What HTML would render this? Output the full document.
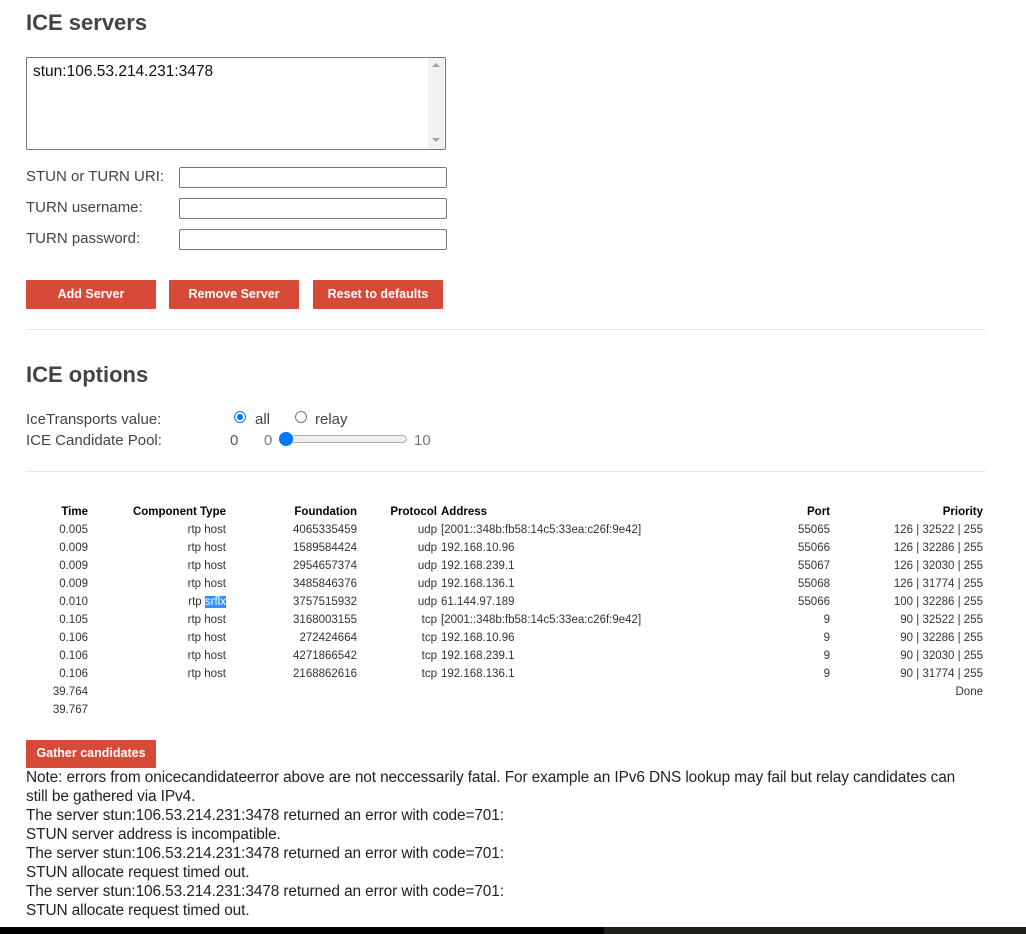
<!DOCTYPE html>
<html><head><meta charset="utf-8"><style>
body{margin:0;width:1026px;height:934px;background:#fff;font-family:"Liberation Sans",Arial,sans-serif;color:#444;position:relative;overflow:hidden}
.a{position:absolute;white-space:nowrap}
h2{position:absolute;margin:0;font-size:22px;font-weight:bold;color:#444;left:26px}
.lbl{font-size:15px;line-height:20px}
.inp{position:absolute;left:179px;width:266px;height:19px;border:1px solid #767676;border-radius:2px}
.btn{position:absolute;height:29px;background:#d84a38;color:#fff;font-size:12.5px;font-weight:bold;text-align:center;line-height:28px;border-radius:1px}
.hr{position:absolute;left:26px;width:960px;height:1px;background:#e8e8e8}
.t{position:absolute;font-size:11.5px;line-height:18px;color:#333}
.t div{height:18px}
.r{text-align:right}
.note{position:absolute;left:26px;top:768px;width:950px;font-size:15.4px;line-height:19px;color:#222;letter-spacing:-0.1px}
</style></head><body>
<h2 style="top:10px">ICE servers</h2>
<div class="a" style="left:26px;top:57px;width:418px;height:91px;border:1px solid #767676;border-radius:2px"></div>
<div class="a" style="left:428px;top:58px;width:16px;height:91px;background:#f1f1f1"></div>
<div class="a" style="left:432px;top:63px;width:0;height:0;border-left:4px solid transparent;border-right:4px solid transparent;border-bottom:4px solid #a3a3a3"></div>
<div class="a" style="left:432px;top:138px;width:0;height:0;border-left:4px solid transparent;border-right:4px solid transparent;border-top:4px solid #a3a3a3"></div>
<div class="a" style="left:33px;top:62px;font-size:15.5px;color:#111;line-height:20px">stun:106.53.214.231:3478</div>
<div class="a lbl" style="left:26px;top:167px">STUN or TURN URI:</div>
<div class="a lbl" style="left:26px;top:198px">TURN username:</div>
<div class="a lbl" style="left:26px;top:229px">TURN password:</div>
<div class="inp" style="top:167px"></div>
<div class="inp" style="top:198px"></div>
<div class="inp" style="top:229px"></div>
<div class="btn" style="left:26px;top:280px;width:130px">Add Server</div>
<div class="btn" style="left:169px;top:280px;width:130px">Remove Server</div>
<div class="btn" style="left:313px;top:280px;width:130px">Reset to defaults</div>
<div class="hr" style="top:329px"></div>
<h2 style="top:362px">ICE options</h2>
<div class="a lbl" style="left:26px;top:410px">IceTransports value:</div>
<div class="a lbl" style="left:26px;top:431px">ICE Candidate Pool:</div>
<div class="a" style="left:234px;top:411px;width:10px;height:10px;border:1px solid #0075ff;border-radius:50%"></div>
<div class="a" style="left:237px;top:414px;width:6px;height:6px;background:#0075ff;border-radius:50%"></div>
<div class="a lbl" style="left:255px;top:410px">all</div>
<div class="a" style="left:295px;top:411px;width:10px;height:10px;border:1px solid #767676;border-radius:50%"></div>
<div class="a lbl" style="left:315px;top:410px">relay</div>
<div class="a lbl" style="left:230px;top:431px;color:#555">0</div>
<div class="a lbl" style="left:264px;top:431px;color:#777">0</div>
<div class="a" style="left:280px;top:435px;width:125px;height:6px;background:#efefef;border:1px solid #b2b2b2;border-radius:4px"></div>
<div class="a" style="left:279px;top:432px;width:14px;height:14px;background:#0075ff;border-radius:50%"></div>
<div class="a lbl" style="left:414px;top:431px;color:#777">10</div>
<div class="hr" style="top:471px"></div>
<div class="t r" style="left:30px;top:503px;width:58px"><div style="font-weight:bold;color:#000">Time</div><div>0.005</div><div>0.009</div><div>0.009</div><div>0.009</div><div>0.010</div><div>0.105</div><div>0.106</div><div>0.106</div><div>0.106</div><div>39.764</div><div>39.767</div></div>
<div class="t r" style="left:100px;top:503px;width:126px"><div style="font-weight:bold;color:#000">Component Type</div><div>rtp host</div><div>rtp host</div><div>rtp host</div><div>rtp host</div><div>rtp <span style="background:#3390ff;color:#fff">srflx</span></div><div>rtp host</div><div>rtp host</div><div>rtp host</div><div>rtp host</div></div>
<div class="t r" style="left:250px;top:503px;width:107px"><div style="font-weight:bold;color:#000">Foundation</div><div>4065335459</div><div>1589584424</div><div>2954657374</div><div>3485846376</div><div>3757515932</div><div>3168003155</div><div>272424664</div><div>4271866542</div><div>2168862616</div></div>
<div class="t r" style="left:380px;top:503px;width:57px"><div style="font-weight:bold;color:#000">Protocol</div><div>udp</div><div>udp</div><div>udp</div><div>udp</div><div>udp</div><div>tcp</div><div>tcp</div><div>tcp</div><div>tcp</div></div>
<div class="t" style="left:441px;top:503px"><div style="font-weight:bold;color:#000">Address</div><div>[2001::348b:fb58:14c5:33ea:c26f:9e42]</div><div>192.168.10.96</div><div>192.168.239.1</div><div>192.168.136.1</div><div>61.144.97.189</div><div>[2001::348b:fb58:14c5:33ea:c26f:9e42]</div><div>192.168.10.96</div><div>192.168.239.1</div><div>192.168.136.1</div></div>
<div class="t r" style="left:770px;top:503px;width:60px"><div style="font-weight:bold;color:#000">Port</div><div>55065</div><div>55066</div><div>55067</div><div>55068</div><div>55066</div><div>9</div><div>9</div><div>9</div><div>9</div></div>
<div class="t r" style="left:840px;top:503px;width:143px"><div style="font-weight:bold;color:#000">Priority</div><div>126 | 32522 | 255</div><div>126 | 32286 | 255</div><div>126 | 32030 | 255</div><div>126 | 31774 | 255</div><div>100 | 32286 | 255</div><div>90 | 32522 | 255</div><div>90 | 32286 | 255</div><div>90 | 32030 | 255</div><div>90 | 31774 | 255</div><div>Done</div></div>
<div class="btn" style="left:26px;top:740px;width:130px;height:28px;line-height:27px">Gather candidates</div>
<div class="note">Note: errors from onicecandidateerror above are not neccessarily fatal. For example an IPv6 DNS lookup may fail but relay candidates can still be gathered via IPv4.<br>The server stun:106.53.214.231:3478 returned an error with code=701:<br>STUN server address is incompatible.<br>The server stun:106.53.214.231:3478 returned an error with code=701:<br>STUN allocate request timed out.<br>The server stun:106.53.214.231:3478 returned an error with code=701:<br>STUN allocate request timed out.</div>
<div class="a" style="left:0;top:927px;width:604px;height:7px;background:#000"></div>
<div class="a" style="left:604px;top:927px;width:422px;height:7px;background:#1e201c"></div>
</body></html>
